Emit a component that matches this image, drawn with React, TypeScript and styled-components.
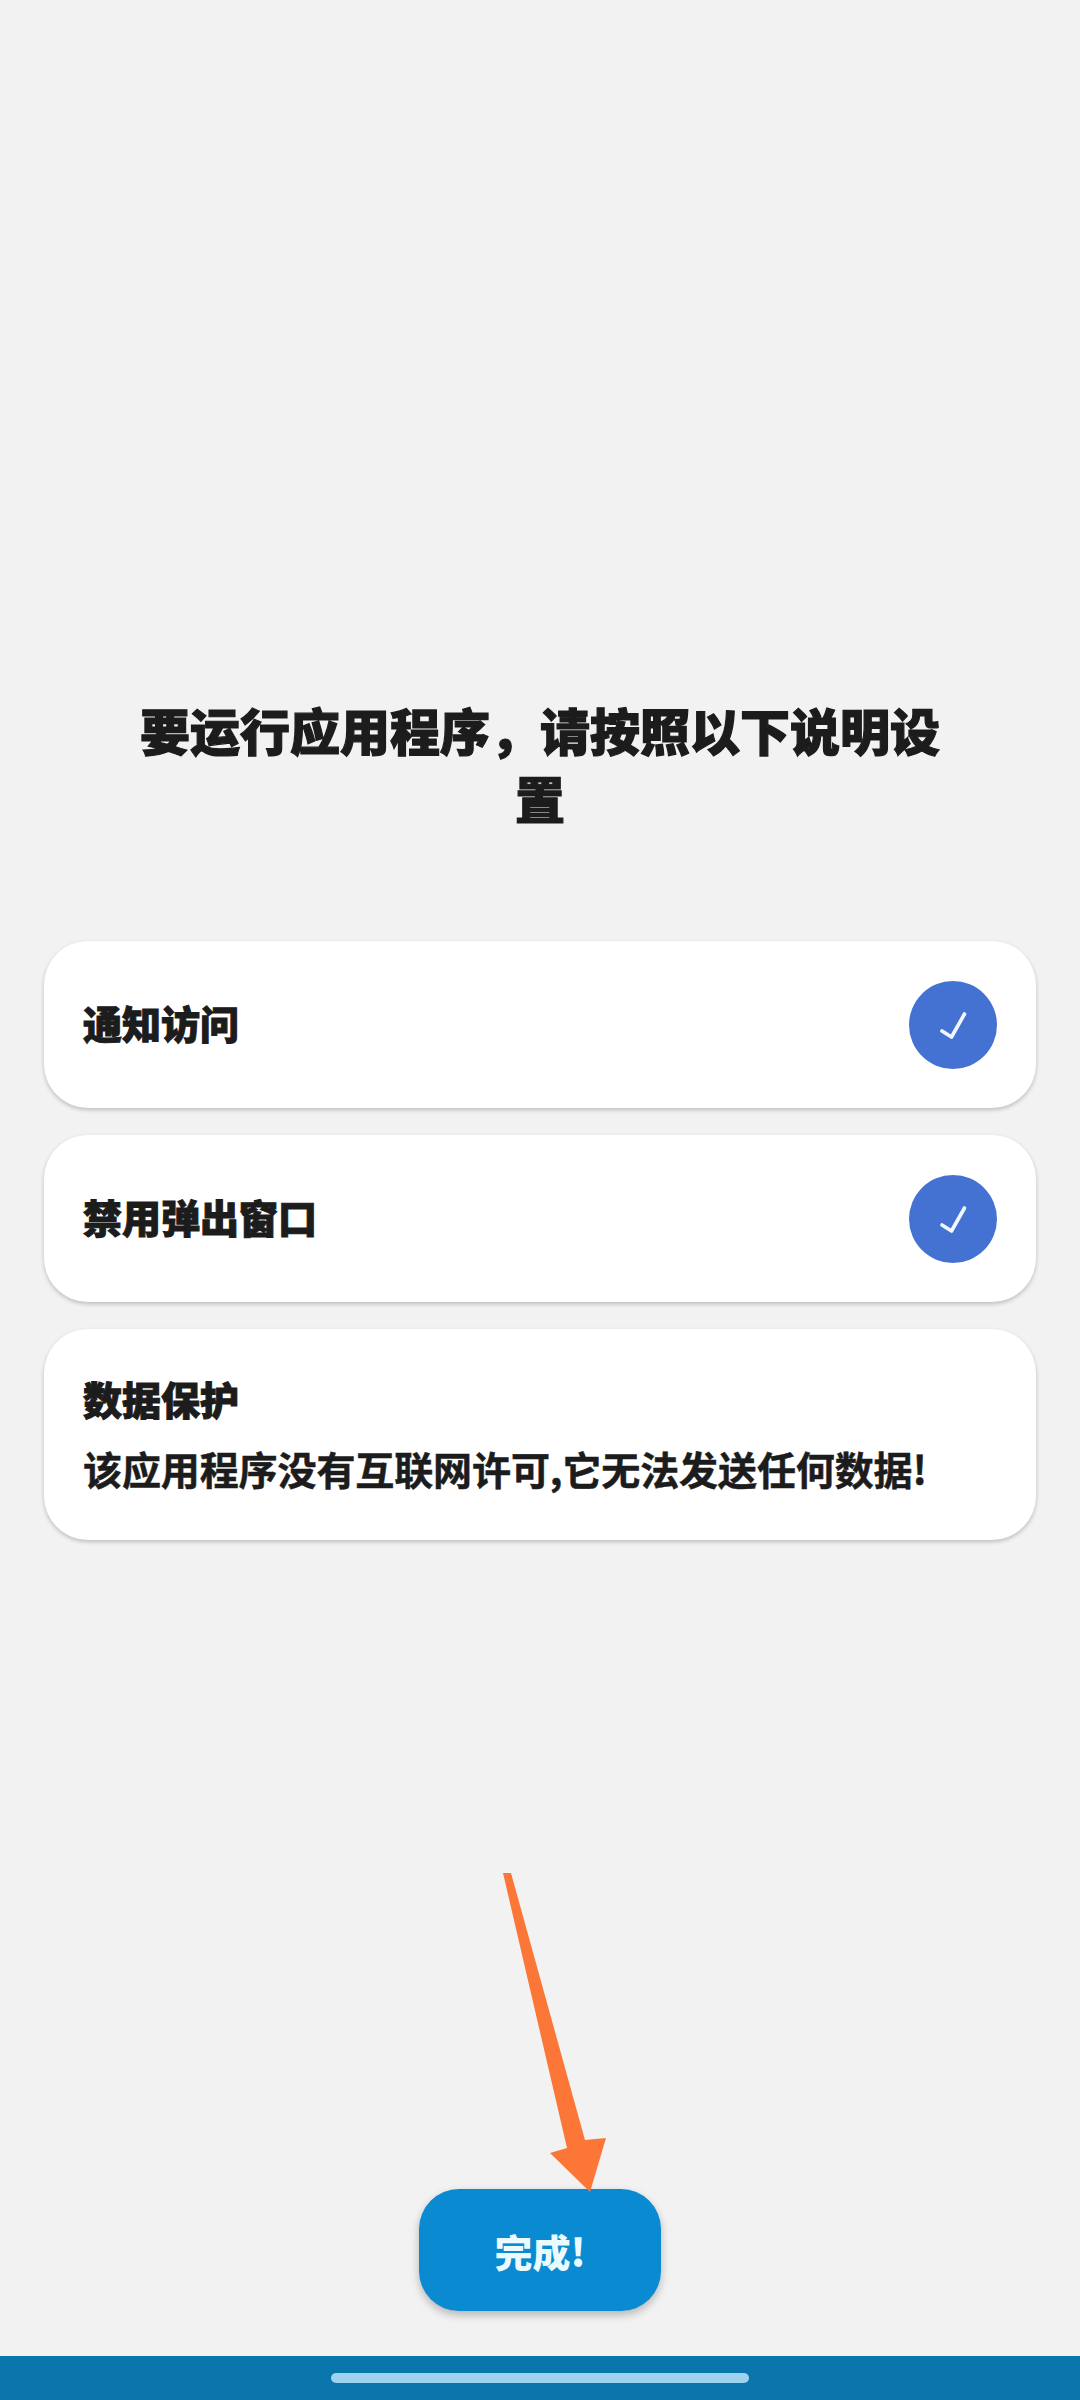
import React from 'react';
import styled, { createGlobalStyle } from 'styled-components';

const tasks = ['通知访问', '禁用弹出窗口'];

export default function App() {
  return (
    <Page>
      <GlobalStyle />
      <Main>
        <Title>要运行应用程序，请按照以下说明设置</Title>
        <CardList>
          {tasks.map(task => (
            <TaskCard key={task}>
              <TaskName>{task}</TaskName>
              <CheckBadge>
                <svg width="30" height="30" viewBox="0 0 30 30" fill="none">
                  <path
                    d="M4 21L13.5 27L26.5 4"
                    stroke="#f2f8ff"
                    strokeWidth="3.6"
                    strokeLinecap="round"
                    strokeLinejoin="round"
                  />
                </svg>
              </CheckBadge>
            </TaskCard>
          ))}
          <NoteCard>
            <CardTitle>数据保护</CardTitle>
            <NoteText>该应用程序没有互联网许可,它无法发送任何数据!</NoteText>
          </NoteCard>
        </CardList>
      </Main>
      <Footer>
        <Arrow width="120" height="325" viewBox="0 0 120 325" fill="none">
          <path d="M3 0L11 0L85 267L106 265L90 319L50 280L67 275Z" fill="#fb7637" />
        </Arrow>
        <DoneButton>完成!</DoneButton>
      </Footer>
      <NavBar>
        <NavHandle />
      </NavBar>
    </Page>
  );
}

const GlobalStyle = createGlobalStyle`
  html, body {
    margin: 0;
    padding: 0;
  }
  body {
    background-color: #f2f2f3;
    font-family: 'Noto Sans CJK SC', 'Noto Sans', sans-serif;
  }
`;

const Page = styled.div`
  display: flex;
  flex-direction: column;
  height: 2400px;
  background-color: #f2f2f3;
`;

const Main = styled.div`
  flex: 1;
  display: flex;
  flex-direction: column;
  padding: 695px 44px 0;
`;

const Title = styled.h1`
  margin: 0 auto;
  width: 820px;
  font-size: 50px;
  font-weight: 900;
  line-height: 68px;
  text-align: center;
  color: #1c1c1c;
  -webkit-text-stroke: 1.2px #1c1c1c;
`;

const CardList = styled.div`
  display: flex;
  flex-direction: column;
  gap: 27px;
  margin-top: 110px;
`;

const TaskCard = styled.div`
  display: flex;
  align-items: center;
  justify-content: space-between;
  box-sizing: border-box;
  height: 167px;
  padding: 0 39px;
  background-color: #fff;
  border-radius: 44px;
  box-shadow: 0 2px 4px rgba(0, 0, 0, 0.22);
`;

const NoteCard = styled.div`
  display: flex;
  flex-direction: column;
  gap: 16px;
  box-sizing: border-box;
  height: 211px;
  padding: 42px 39px 0;
  background-color: #fff;
  border-radius: 44px;
  box-shadow: 0 2px 4px rgba(0, 0, 0, 0.22);
`;

const CardTitle = styled.div`
  font-size: 39px;
  font-weight: 900;
  line-height: 54px;
  color: #1c1c1c;
  -webkit-text-stroke: 1px #1c1c1c;
`;

const TaskName = styled(CardTitle)`
  margin-bottom: 6px;
`;

const NoteText = styled.div`
  font-size: 39px;
  font-weight: 700;
  line-height: 54px;
  letter-spacing: -0.1px;
  color: #1c1c1c;
  white-space: nowrap;
  -webkit-text-stroke: 0.5px #1c1c1c;
`;

const CheckBadge = styled.div`
  display: flex;
  align-items: center;
  justify-content: center;
  width: 88px;
  height: 88px;
  border-radius: 50%;
  background-color: #4472d2;
`;

const Footer = styled.div`
  position: relative;
  display: flex;
  justify-content: center;
  padding-bottom: 45px;
`;

const DoneButton = styled.div`
  display: flex;
  align-items: center;
  justify-content: center;
  width: 242px;
  height: 122px;
  border-radius: 40px;
  background-color: #0a8ad0;
  box-shadow: 0 4px 8px rgba(0, 0, 0, 0.25);
  font-size: 38px;
  font-weight: 900;
  color: #eafaff;
`;

const Arrow = styled.svg`
  position: absolute;
  left: 500px;
  top: -316px;
  z-index: 1;
`;

const NavBar = styled.div`
  display: flex;
  justify-content: center;
  box-sizing: border-box;
  height: 44px;
  padding-top: 17px;
  background-color: #0a76ab;
`;

const NavHandle = styled.div`
  width: 418px;
  height: 10px;
  border-radius: 5px;
  background-color: #9dd3ee;
`;
